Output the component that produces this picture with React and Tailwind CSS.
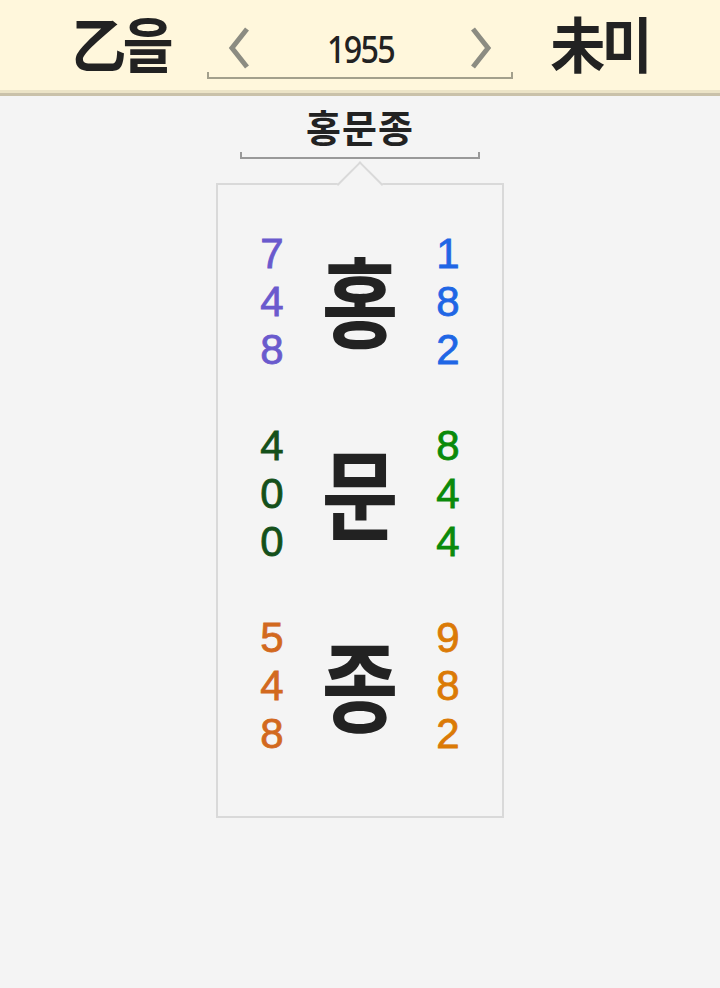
import React from 'react';

const groups = [
  { char: '홍', left: ['7', '4', '8'], right: ['1', '8', '2'], lc: 'text-[#6a5acd]', rc: 'text-[#1f66e5]' },
  { char: '문', left: ['4', '0', '0'], right: ['8', '4', '4'], lc: 'text-[#14501a]', rc: 'text-[#0a8a0a]' },
  { char: '종', left: ['5', '4', '8'], right: ['9', '8', '2'], lc: 'text-[#d2691e]', rc: 'text-[#db7a06]' },
];

const Chevron = ({ dir }) => (
  <svg width="26" height="44" viewBox="0 0 26 44">
    <path
      d={dir === 'left' ? 'M21 3 L6 22 L21 41' : 'M5 3 L20 22 L5 41'}
      fill="none"
      stroke="#8c8c82"
      strokeWidth="5"
    />
  </svg>
);

const Bracket = ({ width, color }) => (
  <div
    className={`h-[7px] border-b-2 border-l-2 border-r-2 ${color}`}
    style={{ width }}
  />
);

const digitFont = { fontFamily: '"Liberation Sans", Arial, sans-serif' };

const App = () => {
  return (
    <div
      className="min-h-[988px] w-[720px] bg-[#f4f4f4] text-[#222]"
      style={{ fontFamily: '"Noto Sans", "Noto Sans CJK KR", sans-serif' }}
    >
      {/* header */}
      <div className="h-[90px] bg-[#fff7dc] flex items-center justify-center gap-[33px]">
        <div className="whitespace-nowrap text-[60px] font-bold leading-none tracking-[-4px] scale-x-[0.92]">乙을</div>
        <div className="flex flex-col items-center pt-[14px]">
          <div className="flex items-center justify-between w-[305px] px-[18px]">
            <Chevron dir="left" />
            <span className="whitespace-nowrap text-[38px] font-medium leading-none tracking-[-2px] scale-x-[0.85]">1955</span>
            <Chevron dir="right" />
          </div>
          <div className="mt-[2px]">
            <Bracket width={306} color="border-[#a3a08c]" />
          </div>
        </div>
        <div className="whitespace-nowrap text-[60px] font-bold leading-none tracking-[-4px] scale-x-[0.92]">未미</div>
      </div>
      <div className="h-[3px] bg-[#ebe3c6]" />
      <div className="h-[3px] bg-[#c9c1a9]" />

      {/* name */}
      <div className="flex flex-col items-center pt-[6px]">
        <div className="text-[38px] font-bold leading-[50px] tracking-[1px]">홍문종</div>
        <Bracket width={240} color="border-[#999]" />

        <div className="relative mt-[24px] w-[288px] h-[635px] border-2 border-[#d9d9d9] bg-[#f4f4f4]">
          <div className="absolute left-1/2 top-[-17px] -translate-x-1/2 w-[33px] h-[33px] rotate-45 border-t-2 border-l-2 border-[#d9d9d9] bg-[#f4f4f4]" />
          <div className="flex flex-col gap-[48px] pt-[45px]">
            {groups.map((g) => (
              <div key={g.char} className="flex items-center justify-center gap-[8px]">
                <div className={`w-[40px] flex flex-col items-center text-[42px] leading-[48px] [-webkit-text-stroke:0.8px_currentColor] ${g.lc}`} style={digitFont}>
                  {g.left.map((d, i) => <span key={i} className="h-[48px]">{d}</span>)}
                </div>
                <div className="w-[120px] text-center text-[98px] font-bold leading-none scale-x-[0.85]">{g.char}</div>
                <div className={`w-[40px] flex flex-col items-center text-[42px] leading-[48px] [-webkit-text-stroke:0.8px_currentColor] ${g.rc}`} style={digitFont}>
                  {g.right.map((d, i) => <span key={i} className="h-[48px]">{d}</span>)}
                </div>
              </div>
            ))}
          </div>
        </div>
      </div>
    </div>
  );
};

export default App;
